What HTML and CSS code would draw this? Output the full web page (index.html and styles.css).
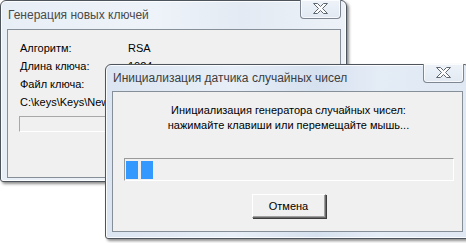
FILE: index.html
```html
<!DOCTYPE html>
<html>
<head>
<meta charset="utf-8">
<link rel="stylesheet" href="styles.css">
</head>
<body>
<div class="desk">
  <div class="win win-back">
    <div class="titlebar"><span class="title">Генерация новых ключей</span></div>
    <div class="close">
      <svg width="41" height="19" viewBox="0 0 41 19"><polygon points="13.5,4.5 17.5,4.5 20.5,7.5 23.5,4.5 27.5,4.5 22.5,9.5 27.5,14.5 23.5,14.5 20.5,11.5 17.5,14.5 13.5,14.5 18.5,9.5" fill="#fdfdfd" stroke="#5e6670" stroke-width="1" stroke-linejoin="round"/></svg>
    </div>
    <div class="client client-back">
      <div class="info">
        <span>Алгоритм:</span><span>RSA</span>
        <span>Длина ключа:</span><span>1024</span>
        <span>Файл ключа:</span><span></span>
      </div>
      <div class="path">C:\keys\Keys\NewKey.key</div>
      <div class="field"></div>
    </div>
  </div>

  <div class="win win-front">
    <div class="titlebar"><span class="title">Инициализация датчика случайных чисел</span></div>
    <div class="close">
      <svg width="41" height="19" viewBox="0 0 41 19"><polygon points="13.5,4.5 17.5,4.5 20.5,7.5 23.5,4.5 27.5,4.5 22.5,9.5 27.5,14.5 23.5,14.5 20.5,11.5 17.5,14.5 13.5,14.5 18.5,9.5" fill="#fdfdfd" stroke="#5e6670" stroke-width="1" stroke-linejoin="round"/></svg>
    </div>
    <div class="client client-front">
      <div class="msg">Инициализация генератора случайных чисел:<br>нажимайте клавиши или перемещайте мышь...</div>
      <div class="progress"><span class="blk"></span><span class="blk"></span></div>
      <div class="btnrow"><button class="btn">Отмена</button></div>
    </div>
  </div>
</div>
</body>
</html>
```

FILE: styles.css
```css
html, body {
  margin: 0;
  padding: 0;
  background: #ffffff;
  overflow: hidden;
}
.desk {
  position: relative;
  width: 466px;
  height: 243px;
  font-family: "Liberation Sans", Arial, sans-serif;
  font-size: 11px;
  color: #000;
}
.win {
  position: absolute;
  box-sizing: border-box;
  display: flex;
  flex-direction: column;
  border: 1px solid #4e545c;
  border-radius: 6px 6px 3px 3px;
  box-shadow: 2px 2px 3px rgba(0,0,0,0.45), inset 0 0 0 1px rgba(255,255,255,0.8);
}
.win-back {
  left: 0;
  top: 0;
  width: 347px;
  height: 182px;
  padding: 0 5px 3px 6px;
  background: linear-gradient(to right, #e8eef6 0%, #eef3f9 45%, #e3eaf3 70%, #edf2f8 100%);
}
.win-front {
  left: 105px;
  top: 64px;
  width: 365px;
  height: 175px;
  padding: 0 6px 6px 6px;
  background: linear-gradient(to right, #dbe5f1 0%, #e7eef7 35%, #d6e1ef 58%, #e4ecf6 75%, #dfe8f3 100%);
}
.titlebar {
  display: flex;
  align-items: center;
  flex: none;
}
.win-back .titlebar { height: 28px; }
.win-front .titlebar { height: 26px; }
.title {
  font-size: 12px;
  color: #3d3d3d;
  padding-left: 1px;
  white-space: nowrap;
}
.win-back .title { color: #4a4a4a; }
.close {
  position: absolute;
  top: -1px;
  right: 5px;
  width: 41px;
  height: 19px;
  box-sizing: border-box;
  border: 1px solid #7d8691;
  border-top: none;
  border-radius: 0 0 4px 4px;
  background: linear-gradient(to bottom, #eef3f9, #e2e9f2);
  box-shadow: inset 0 0 0 1px rgba(255,255,255,0.7);
}
.close svg {
  position: absolute;
  left: -1px;
  top: -1px;
}
.win-front .close { right: 5px; height: 19px; }
.client {
  flex: 1;
  background: #f0f0f0;
  border: 1px solid #868e98;
  box-sizing: border-box;
  min-height: 0;
}
.client-back {
  padding: 9px 0 0 12px;
  overflow: hidden;
}
.info {
  display: grid;
  grid-template-columns: 108px auto;
  grid-auto-rows: 18px;
  align-items: center;
  line-height: 18px;
}
.path {
  line-height: 18px;
  white-space: nowrap;
}
.field {
  margin-top: 5px;
  margin-left: -1px;
  width: 310px;
  height: 16px;
  box-sizing: border-box;
  border: 1px solid #a8a8a8;
  border-right-color: #ffffff;
  border-bottom-color: #ffffff;
  background: #f0f0f0;
}
.client-front {
  display: flex;
  flex-direction: column;
  align-items: center;
  padding-top: 11px;
}
.msg {
  text-align: center;
  line-height: 15px;
  margin-left: 2px;
}
.progress {
  margin-top: 25px;
  align-self: flex-start;
  margin-left: 11px;
  width: 330px;
  height: 23px;
  box-sizing: border-box;
  border: 1px solid #9a9a9a;
  border-right-color: #ffffff;
  border-bottom-color: #ffffff;
  background: #f0f0f0;
  display: flex;
  gap: 3px;
  padding: 2px 0 2px 1px;
}
.blk {
  width: 12px;
  height: 18px;
  background: #3399ff;
}
.btnrow {
  margin-top: 13px;
  display: flex;
  justify-content: center;
  align-self: stretch;
  padding-left: 2px;
}
.btn {
  width: 74px;
  height: 24px;
  box-sizing: border-box;
  font-family: "Liberation Sans", Arial, sans-serif;
  font-size: 11px;
  color: #000;
  background: #f0f0f0;
  border: 1px solid;
  border-color: #ffffff #6b6b6b #6b6b6b #ffffff;
  box-shadow: inset -1px -1px 0 #a0a0a0, 1px 1px 0 #3c3c3c;
  padding: 0;
}
```
